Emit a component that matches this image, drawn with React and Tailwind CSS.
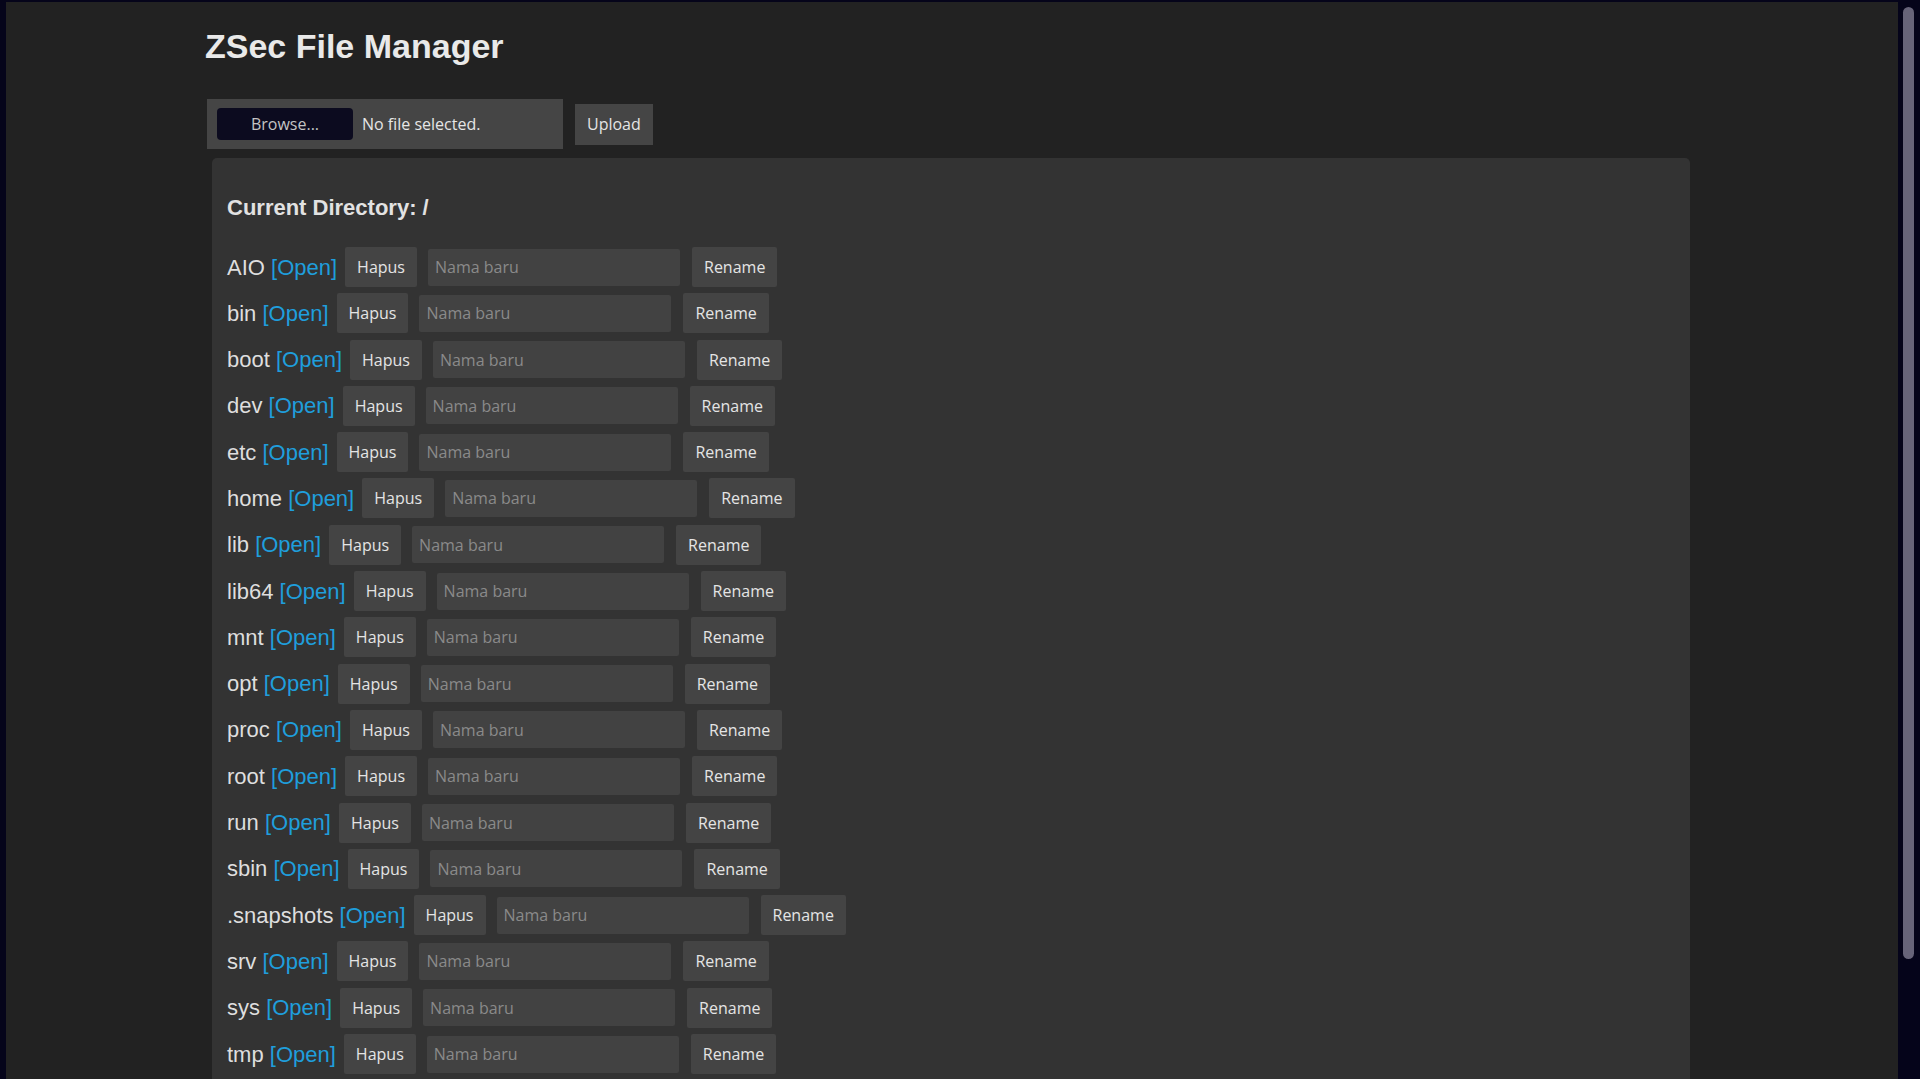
import React from 'react';

const dirs = [
  'AIO', 'bin', 'boot', 'dev', 'etc', 'home', 'lib', 'lib64', 'mnt', 'opt',
  'proc', 'root', 'run', 'sbin', '.snapshots', 'srv', 'sys', 'tmp',
];

const btn =
  "h-[40px] px-[12px] rounded-[2px] bg-[#444] text-[#e4e4e4] text-[16px] font-['Open_Sans',sans-serif] leading-[22px]";

const DirRow = ({ name }) => (
  <div className="flex items-center h-[40px] shrink-0">
    <span className="text-[22px] leading-[25px] text-[#dedede] whitespace-pre">
      {name}{' '}
      <a href="#" className="text-[#1f9edc]">[Open]</a>
    </span>
    <button className={`${btn} ml-[8px]`}>Hapus</button>
    <input
      type="text"
      placeholder="Nama baru"
      className="ml-[11px] w-[252px] h-[37px] rounded-[2px] bg-[#424242] pl-[7px] text-[16px] text-[#ddd] placeholder:text-[#8a8a8a] font-['Open_Sans',sans-serif] outline-none"
    />
    <button className={`${btn} ml-[12px]`}>Rename</button>
  </div>
);

export default function App() {
  return (
    <div className="flex h-[1079px] w-full overflow-hidden bg-[#05041a] pl-[6px] pt-[2px] font-['Liberation_Sans',Arial,sans-serif]">
      {/* page */}
      <div className="flex-1 bg-[#222] overflow-hidden">
        <div className="w-[1490px] mx-auto">
          <h1 className="mt-[25px] -ml-[2px] text-[34px] leading-[39px] font-bold text-[#e9e9e9]">
            ZSec File Manager
          </h1>

          <div className="mt-[33px] flex items-center gap-[12px]">
            <div className="w-[356px] h-[50px] bg-[#454545] flex items-center pl-[10px]">
              <div className="w-[136px] h-[32px] rounded-[4px] bg-[#0c0b1f] flex items-center justify-center text-[16px] text-[#c4c4c4] font-['Open_Sans',sans-serif]">
                Browse...
              </div>
              <span className="ml-[9px] text-[16px] text-[#e6e6e6] font-['Open_Sans',sans-serif]">
                No file selected.
              </span>
            </div>
            <button className="h-[41px] px-[12px] bg-[#454545] text-[#e4e4e4] text-[16px] font-['Open_Sans',sans-serif]">
              Upload
            </button>
          </div>

          <div className="mt-[9px] ml-[5px] mr-[7px] h-[1000px] bg-[#333] rounded-[5px] pt-[37px] px-[15px]">
            <h2 className="text-[22px] leading-[25px] font-bold text-[#e2e2e2]">
              Current Directory: /
            </h2>
            <div className="mt-[27px] flex flex-col gap-[6.3px]">
              {dirs.map((d) => (
                <DirRow key={d} name={d} />
              ))}
            </div>
          </div>
        </div>
      </div>

      {/* scrollbar */}
      <div className="w-[22px] shrink-0 bg-[#05041a] pt-[5px] pl-[5px]">
        <div className="w-[11px] h-[952px] rounded-full bg-[#676479]" />
      </div>
    </div>
  );
}
